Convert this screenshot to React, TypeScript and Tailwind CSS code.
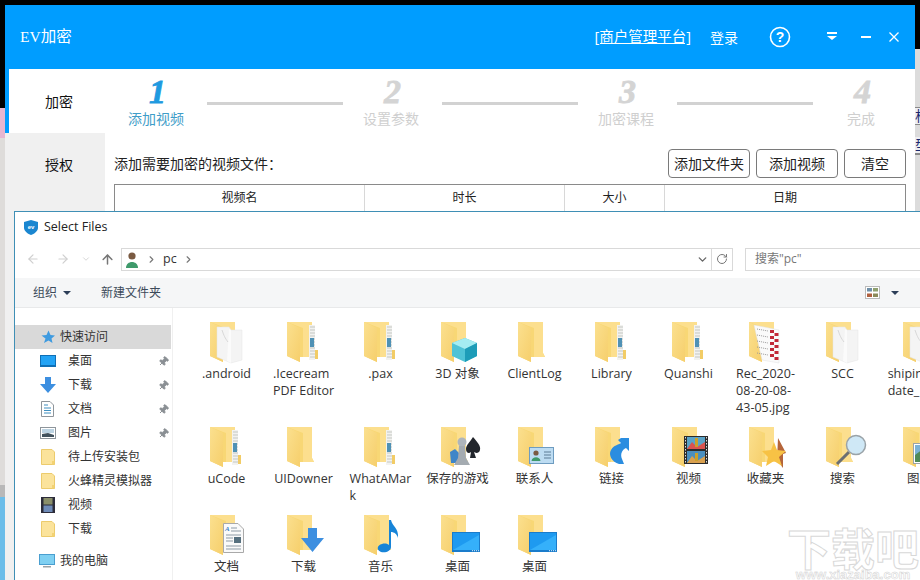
import { ArrowLeft, ArrowRight, ArrowUp, ChevronDown, ChevronRight, Pin, RotateCw } from 'lucide-react';
import type { ReactNode } from 'react';

const Papers = ({ dot }: { dot?: boolean }) => (
  <g>
    <path d="M7 7 L19 7 L21 10 L32 10 L32 40 L21 43 L7 37 Z" fill="#f4f4f4" stroke="#e4e4e4" strokeWidth="0.5" />
    <path d="M19 9 L21 10 L21 43 L17 41 Z" fill="#fbfbfb" />
    <path d="M12 10 C14 16 15 18 18 22" stroke="#d8d8d8" fill="none" />
    {dot && <circle cx="20" cy="22" r="1.6" fill="#222" />}
  </g>
);

const Zipper = () => (
  <g>
    <path d="M22 5 H28 V40 H22 Z" fill="#f2f2f0" />
    {[7, 10, 13, 16, 19, 22, 25, 28, 31, 34, 37].map((y) => (
      <line key={y} x1="23" x2="28" y1={y} y2={y} stroke="#c4c7c2" strokeWidth="1" />
    ))}
    <rect x="23" y="18" width="4" height="9" fill="#4f91b5" />
    <rect x="28" y="30" width="3" height="9" fill="#f2cc66" />
  </g>
);

const Cube = () => (
  <g>
    <path d="M24 18 L36 23 V36 L24 42 L11 36 V23 Z" fill="#4fc3d6" />
    <path d="M24 18 L36 23 L24 29 L11 23 Z" fill="#a5edf2" />
    <path d="M24 29 L36 23 V36 L24 42 Z" fill="#1d9cb8" />
  </g>
);

const Chess = () => (
  <g>
    <path d="M9 27 L14 24 L18 28 V38 H10 Z" fill="#3f86c8" />
    <path d="M32 12 C37 18 40 21 39 25 C38 29 34 28 33 27 L35 33 H29 L30 27 C28 29 25 28 25 24 C25 20 29 17 32 12 Z" fill="#22262c" />
    <circle cx="21" cy="17" r="4.5" fill="#aeb5bb" />
    <path d="M18 21 H24 L25 33 L29 40 H13 L17 33 Z" fill="#a4abb1" />
  </g>
);

const Contact = () => (
  <g>
    <rect x="11.5" y="22.5" width="24" height="16" fill="#bddcf2" stroke="#6e9cc0" />
    <circle cx="18" cy="28" r="2.6" fill="#7a5a42" />
    <path d="M13.5 36 C14 31 22 31 22.5 36 Z" fill="#3f9a6b" />
    <path d="M26 27 H33 M26 30 H33 M26 33 H33" stroke="#5c7d96" />
  </g>
);

const DocSheet = () => (
  <g>
    <path d="M13.5 10.5 H28 L33.5 16 V39.5 H13.5 Z" fill="#fafafa" stroke="#a9a9a9" />
    <text x="15" y="18" fontSize="7" fontStyle="italic" fontWeight="700" fill="#3b82c4" fontFamily="Liberation Serif, serif">A</text>
    <path d="M21 15 H27 M21 18 H31 M16 22 H31 M16 25 H23 M16 28 H23 M16 33 H31 M16 36 H31" stroke="#8d9aa5" />
    <rect x="24" y="24" width="7" height="6" fill="#56707f" />
  </g>
);

const DownArrow = ({ x = 14, y = 15 }: { x?: number; y?: number }) => (
  <path transform={`translate(${x} ${y})`} d="M7 0 H16 V10 H23 L11.5 24 L0 10 H7 Z" fill="#3d8fe0" />
);

const Note = () => (
  <g>
    <path d="M25 7 L27 7 C28 13 35 15 34 25 C33 21 30 19 27 19 V34 C27 38 22 40 17 39 C12 37 13 32 18 31 C21 30 24 31 25 32 Z" fill="#1784d8" />
  </g>
);

const Screen = ({ x = 11, y = 19 }: { x?: number; y?: number }) => (
  <g transform={`translate(${x} ${y})`}>
    <rect width="28" height="20" fill="#1a7ccb" />
    <path d="M1 1 H27 V18 H1 Z" fill="#1e9af0" />
    <path d="M1 18 L27 3 V18 Z" fill="#35b0fa" />
    <path d="M20 18.7 H27" stroke="#d9eefc" strokeDasharray="1 1" />
  </g>
);

const LinkArrow = () => (
  <path d="M26 13 H34 V26 L31 23 C27 25 25 29 27 34 L29 39 H24 C17 37 13 30 16 25 C19 20 23 20 26 18 L23 15 Z" fill="#2a8de0" />
);

const Film = () => (
  <g>
    <rect x="12" y="11" width="24" height="28" fill="#2b2b2b" />
    <rect x="15" y="12" width="18" height="12" fill="#5aa3c8" />
    <rect x="15" y="26" width="18" height="12" fill="#4a8fc0" />
    <path d="M15 24 L20 17 L25 22 L33 17 V24 Z" fill="#d9534f" />
    <path d="M15 38 L20 31 L25 36 L33 31 V38 Z" fill="#d9a04f" />
    <path d="M23 13 H26 V22 H23 Z M23 28 H26 V36 H23 Z" fill="#caa12a" />
    <path d="M13.5 12 V38 M34.5 12 V38" stroke="#ddd" strokeDasharray="1.5 1.5" />
  </g>
);

const Star = () => (
  <g>
    <path d="M29 13 L37 28 L34 29 L34 43 L28 35 Z" fill="#b5653a" />
    <path d="M25 17 L28 25 L37 26 L30 32 L33 41 L25 36 L17 41 L19 32 L13 26 L22 25 Z" fill="#f7c245" />
  </g>
);

const Search = () => (
  <g>
    <path d="M11 39 L23 27" stroke="#6b6f72" strokeWidth="3" />
    <circle cx="30" cy="20" r="9.5" fill="#cfe8f6" stroke="#9aa3a8" strokeWidth="1.5" />
  </g>
);

const Photo = () => (
  <g>
    <rect x="10.5" y="18.5" width="28" height="20" fill="#fff" stroke="#9aa3a8" />
    <rect x="12" y="20" width="25" height="17" fill="#7bb2d6" />
    <path d="M12 37 V30 L20 24 L27 31 L37 28 V37 Z" fill="#4f8a58" />
  </g>
);

const RedList = () => (
  <g>
    <path d="M5 5 L30 10 V43 L13 40 Z" fill="#fafafa" stroke="#e2e2e2" strokeWidth="0.5" />
    {[11, 17, 23, 29, 35].map((y) => (
      <g key={y}>
        <path d={`M8 ${y - 2} L19 ${y}`} stroke="#9a9a9a" strokeDasharray="1 1" />
        <rect x="21" y={y - 1} width="4" height="3" fill="#c22838" />
        <rect x="25.5" y={y + 2} width="4" height="3" fill="#c22838" />
      </g>
    ))}
  </g>
);

const Folder = ({ children }: { children?: ReactNode }) => (
  <svg width="48" height="48" viewBox="0 0 48 48" className="block overflow-visible">
    <defs>
      <linearGradient id="folderFront" x1="0" y1="0" x2="1" y2="1">
        <stop offset="0" stopColor="#fbe08f" />
        <stop offset="1" stopColor="#f6cf6c" />
      </linearGradient>
    </defs>
    <path d="M0 2 H25 V33 L27 37 H13 V42 L0 36 Z" fill="#f8d775" />
    <path d="M25 2 V33 L27 37 H16 V8 L0 2 Z" fill="#fcdf8e" />
    <path d="M0 2 L13 8 V42 L0 36 Z" fill="url(#folderFront)" />
    {children}
  </svg>
);

const items: { lines: string[]; icon?: ReactNode }[] = [
  { lines: ['.android'], icon: <Papers /> },
  { lines: ['.Icecream', 'PDF Editor'], icon: <Zipper /> },
  { lines: ['.pax'], icon: <Zipper /> },
  { lines: ['3D 对象'], icon: <Cube /> },
  { lines: ['ClientLog'] },
  { lines: ['Library'], icon: <Zipper /> },
  { lines: ['Quanshi'], icon: <Zipper /> },
  { lines: ['Rec_2020-', '08-20-08-', '43-05.jpg'], icon: <RedList /> },
  { lines: ['SCC'], icon: <Papers /> },
  { lines: ['shipin_upd', 'date_1'], icon: <Papers dot /> },
  { lines: ['uCode'], icon: <Zipper /> },
  { lines: ['UIDowner'] },
  { lines: ['WhatAMar', 'k'], icon: <Zipper /> },
  { lines: ['保存的游戏'], icon: <Chess /> },
  { lines: ['联系人'], icon: <Contact /> },
  { lines: ['链接'], icon: <LinkArrow /> },
  { lines: ['视频'], icon: <Film /> },
  { lines: ['收藏夹'], icon: <Star /> },
  { lines: ['搜索'], icon: <Search /> },
  { lines: ['图片'], icon: <Photo /> },
  { lines: ['文档'], icon: <DocSheet /> },
  { lines: ['下载'], icon: <DownArrow /> },
  { lines: ['音乐'], icon: <Note /> },
  { lines: ['桌面'], icon: <Screen /> },
  { lines: ['桌面'], icon: <Screen /> },
];

const MiniFolder = () => (
  <svg width="14" height="16" viewBox="0 0 14 16">
    <path d="M0.5 0.5 H11 L13.5 3 V15.5 H0.5 Z" fill="#fbe39b" stroke="#eccb6c" />
    <path d="M11 12 H13.5 V15.5 H11 Z" fill="#f3d273" />
  </svg>
);

const navItems: { label: string; pinned?: boolean; icon: ReactNode }[] = [
  {
    label: '桌面',
    pinned: true,
    icon: (
      <svg width="16" height="12" viewBox="0 0 16 12">
        <rect width="16" height="12" fill="#0f6fb5" />
        <rect x="1" y="1" width="14" height="9" fill="#22a3f5" />
      </svg>
    ),
  },
  {
    label: '下载',
    pinned: true,
    icon: (
      <svg width="16" height="16" viewBox="0 0 16 16">
        <path d="M5 0 H11 V7 H16 L8 16 L0 7 H5 Z" fill="#3d8fe0" />
      </svg>
    ),
  },
  {
    label: '文档',
    pinned: true,
    icon: (
      <svg width="13" height="16" viewBox="0 0 13 16">
        <path d="M0.5 0.5 H9 L12.5 4 V15.5 H0.5 Z" fill="#fff" stroke="#8e959b" />
        <path d="M3 4 H7 M3 7 H10 M3 9.5 H10 M3 12 H10" stroke="#3f8fc0" />
      </svg>
    ),
  },
  {
    label: '图片',
    pinned: true,
    icon: (
      <svg width="16" height="12" viewBox="0 0 16 12">
        <rect x="0.5" y="0.5" width="15" height="11" fill="#fff" stroke="#8e959b" />
        <rect x="2" y="2" width="12" height="4" fill="#bcd3e2" />
        <path d="M2 10 V7 L8 6 L14 8 V10 Z" fill="#41515c" />
      </svg>
    ),
  },
  { label: '待上传安装包', icon: <MiniFolder /> },
  { label: '火蜂精灵模拟器', icon: <MiniFolder /> },
  {
    label: '视频',
    icon: (
      <svg width="14" height="16" viewBox="0 0 14 16">
        <rect width="14" height="16" fill="#2c2c3a" />
        <rect x="2.5" y="1" width="9" height="6.5" fill="#8a8f6a" />
        <rect x="2.5" y="8.5" width="9" height="6.5" fill="#6f8bb8" />
      </svg>
    ),
  },
  { label: '下载', icon: <MiniFolder /> },
];

const Step = ({ num, label, active }: { num: string; label: string; active?: boolean }) => (
  <div className="flex w-[99px] shrink-0 flex-col items-center">
    <span className={`font-['Liberation_Serif',serif] text-[34px] leading-[36px] font-bold italic [-webkit-text-stroke:0.8px_currentColor] ${active ? 'text-[#1f9ae0]' : 'text-[#d4d4d4]'}`}>
      {num}
    </span>
    <span className={`-ml-[3px] text-[14px] leading-[18px] ${active ? 'text-[#3f9dc8]' : 'text-[#cfcfcf]'}`}>{label}</span>
  </div>
);

const StepLine = () => <div className="mt-[28px] h-[3px] w-[136px] shrink-0 bg-[#d2d2d2]" />;

const ToolButton = ({ label, width }: { label: string; width: string }) => (
  <button className={`h-[29px] rounded-[4px] border border-[#7a7a7a] bg-white text-[14px] text-[#222] ${width}`}>{label}</button>
);

export default function App() {
  return (
    <div className="relative flex h-[580px] w-[920px] overflow-hidden bg-black font-['Open_Sans','Noto_Sans_CJK_SC',sans-serif]">
      {/* desktop behind the windows */}
      <div className="flex h-full w-[5px] shrink-0 flex-col">
        <div className="h-[108px] bg-black" />
        <div className="h-[30px] bg-[#e6b6d0]" />
        <div className="h-[347px] bg-[#dedcda]" />
        <div className="h-[12px] bg-[#b8b8b8]" />
        <div className="flex-1 bg-[#6bbde9]" />
      </div>

      {/* EV window */}
      <div className="mt-[5px] flex w-[910px] shrink-0 flex-col">
        <div className="flex h-[64px] shrink-0 items-center bg-[#009dff] pr-[16px] pl-[15px] text-white">
          <span className="font-['Liberation_Serif','Noto_Sans_CJK_SC',serif] text-[15.5px]">EV加密</span>
          <div className="ml-auto flex items-center">
            <a className="text-[14.5px] underline">[商户管理平台]</a>
            <span className="ml-[19px] text-[14px]">登录</span>
            <svg width="22" height="22" viewBox="0 0 22 22" className="ml-[31px]">
              <circle cx="11" cy="11" r="9.5" fill="none" stroke="#fff" strokeWidth="1.6" />
              <text x="11" y="16" textAnchor="middle" fontSize="14" fontWeight="700" fill="#fff" fontFamily="Liberation Sans, sans-serif">?</text>
            </svg>
            <svg width="12" height="8" viewBox="0 0 12 8" className="mb-[2px] ml-[35px]">
              <rect x="1" y="0" width="10" height="2" fill="#fff" />
              <path d="M1 4 H11 L6 8 Z" fill="#fff" />
            </svg>
            <div className="ml-[23px] h-[2px] w-[10px] bg-white" />
            <svg width="10" height="10" viewBox="0 0 10 10" className="ml-[18px]">
              <path d="M0.5 0.5 L9.5 9.5 M9.5 0.5 L0.5 9.5" stroke="#fff" strokeWidth="1.3" />
            </svg>
          </div>
        </div>

        <div className="flex min-h-0 flex-1 bg-white">
          <div className="flex w-[100px] shrink-0 flex-col text-center text-[14px] text-[#111]">
            <div className="flex h-[64px] border-l-[4px] border-[#009dff] bg-white pl-[4px]">
              <span className="m-auto">加密</span>
            </div>
            <div className="h-[63px] bg-[#f0f0f0] pt-[21px] pl-[8px]">授权</div>
            <div className="flex-1 bg-[#f0f0f0]" />
          </div>

          <div className="flex min-w-0 flex-1 flex-col">
            <div className="flex h-[64px] pt-[5px] pl-[3px]">
              <Step num="1" label="添加视频" active />
              <StepLine />
              <Step num="2" label="设置参数" />
              <StepLine />
              <Step num="3" label="加密课程" />
              <StepLine />
              <Step num="4" label="完成" />
            </div>
            <div className="flex items-center pt-[16px] pr-[9px] pl-[9px]">
              <span className="text-[14px] text-[#222]">添加需要加密的视频文件：</span>
              <div className="ml-auto flex gap-[6px]">
                <ToolButton label="添加文件夹" width="w-[82px]" />
                <ToolButton label="添加视频" width="w-[82px]" />
                <ToolButton label="清空" width="w-[62px]" />
              </div>
            </div>
            <div className="mt-[6px] mr-[9px] ml-[9px] flex h-[28px] border-x border-t border-[#8a8a8a] text-center text-[12px] leading-[25px] text-[#222]">
              <div className="w-[250px] border-r border-[#d8d8d8]">视频名</div>
              <div className="w-[200px] border-r border-[#d8d8d8]">时长</div>
              <div className="w-[100px] border-r border-[#d8d8d8]">大小</div>
              <div className="flex-1">日期</div>
            </div>
          </div>
        </div>
      </div>

      <div className="relative h-full flex-1 bg-[#dcdcdc]">
        <div className="h-[49px] bg-black" />
        <div className="mt-[58px] h-[18px] overflow-hidden border-y border-[#8a8a8a] bg-[#eeeef2] text-[14px] leading-[16px] text-[#1a2a70]">析</div>
        <div className="mt-[12px] h-[18px] overflow-hidden border-b-2 border-[#8a8a8a] bg-[#eeeef2] text-[14px] leading-[16px] text-[#1a2a70]">型</div>
      </div>

      {/* Select Files dialog */}
      <div className="absolute top-[211px] left-[14px] flex h-[369px] w-[910px] flex-col border-t border-l border-[#3f8fb5] bg-white text-[#333]">
        <div className="flex h-[28px] shrink-0 items-center pt-[2px] pl-[9px]">
          <svg width="14" height="15" viewBox="0 0 14 15">
            <path d="M7 0 L14 2 V8 C14 11 10 14 7 15 C4 14 0 11 0 8 V2 Z" fill="#1a86d0" />
            <text x="7" y="9" textAnchor="middle" fontSize="6" fontWeight="700" fill="#fff" fontFamily="Liberation Sans, sans-serif">ev</text>
          </svg>
          <span className="ml-[6px] text-[12.5px] text-[#222]">Select Files</span>
        </div>

        <div className="flex h-[38px] shrink-0 items-center">
          <ArrowLeft size={14} className="ml-[11px] text-[#cfcfcf]" />
          <ArrowRight size={14} className="ml-[16px] text-[#cfcfcf]" />
          <ChevronDown size={10} className="ml-[11px] text-[#cfcfcf]" />
          <ArrowUp size={15} className="ml-[9px] text-[#777]" strokeWidth={2.4} />
          <div className="ml-[6px] flex h-[23px] w-[612px] items-center border border-[#d9d9d9]">
            <svg width="14" height="17" viewBox="0 0 14 17" className="ml-[3px]">
              <circle cx="7" cy="5" r="3.6" fill="#7a5a42" />
              <path d="M1 17 C1 9 13 9 13 17 Z" fill="#3f9a6b" />
            </svg>
            <ChevronRight size={11} className="ml-[7px] text-[#777]" strokeWidth={2.5} />
            <span className="ml-[6px] text-[12.5px]">pc</span>
            <ChevronRight size={11} className="ml-[6px] text-[#777]" strokeWidth={2.5} />
            <ChevronDown size={13} className="ml-auto text-[#666]" strokeWidth={2.5} />
            <div className="ml-[2px] flex h-full w-[21px] items-center justify-center border-l border-[#d9d9d9]">
              <RotateCw size={12} className="text-[#777]" />
            </div>
          </div>
          <div className="ml-[12px] flex h-[23px] flex-1 items-center border border-[#d9d9d9] pl-[9px] text-[12px] text-[#777]">搜索"pc"</div>
        </div>

        <div className="flex h-[30px] shrink-0 items-center border-b border-[#e8e9ea] bg-[#f5f6f7] pl-[18px] text-[12px] text-[#3c4a5a]">
          <span>组织</span>
          <div className="ml-[6px] h-0 w-0 border-x-[4px] border-t-[4px] border-x-transparent border-t-[#2c3e58]" />
          <span className="ml-[30px]">新建文件夹</span>
          <svg width="15" height="13" viewBox="0 0 15 13" className="ml-[704px]">
            <rect x="0.5" y="0.5" width="14" height="12" fill="#fff" stroke="#bbb" />
            <rect x="2" y="2" width="5" height="3.5" fill="#6f8fa8" />
            <rect x="8" y="2" width="5" height="3.5" fill="#8fa06f" />
            <rect x="2" y="7.5" width="5" height="3.5" fill="#b0603f" />
            <rect x="8" y="7.5" width="5" height="3.5" fill="#8a8a5a" />
          </svg>
          <div className="ml-[11px] h-0 w-0 border-x-[4px] border-t-[4px] border-x-transparent border-t-[#2c3e58]" />
        </div>

        <div className="flex min-h-0 flex-1">
          <div className="w-[158px] shrink-0 border-r border-[#f0f0f0] pt-[17px] text-[12px]">
            <div className="flex h-[24px] w-[156px] items-center bg-[#d9d9d9] pl-[26px]">
              <svg width="14" height="14" viewBox="0 0 14 14">
                <path d="M7.5 0.5 L9.5 5 L14 5.5 L10.5 8.5 L11.5 13 L7.5 10.5 L3 13 L4.5 8.5 L0.5 5.5 L5.5 5 Z" fill="#3f9be0" />
              </svg>
              <span className="ml-[5px]">快速访问</span>
            </div>
            {navItems.map((item, index) => (
              <div key={index} className="flex h-[24px] w-[156px] items-center">
                <div className="flex w-[49px] shrink-0 justify-center pl-[16px]">{item.icon}</div>
                <span className="ml-[4px]">{item.label}</span>
                {item.pinned && <Pin size={11} className="mr-[2px] ml-auto rotate-45 fill-[#8a8f94] text-[#8a8f94]" />}
              </div>
            ))}
            <div className="mt-[8px] flex h-[24px] items-center pl-[24px]">
              <svg width="16" height="14" viewBox="0 0 16 14">
                <rect x="0.5" y="0.5" width="15" height="10" fill="#7fd0f2" stroke="#4a9fd0" />
                <rect x="4" y="12" width="8" height="1.5" fill="#9aa3a8" />
              </svg>
              <span className="ml-[5px]">我的电脑</span>
            </div>
          </div>

          <div className="grid flex-1 auto-rows-min grid-cols-[repeat(10,77px)] pt-[7px] pl-[15px] text-center text-[12.5px] leading-[17px] text-[#333]">
            {items.map((item, index) => (
              <div key={index} className={`${index < 10 ? 'h-[105px]' : index < 20 ? 'h-[88px]' : 'h-[60px]'}`}>
                <div className="h-[50px] pt-[5px] pl-[22px]">
                  <Folder>{item.icon}</Folder>
                </div>
                <div className={`mx-auto ${item.lines.length > 1 ? 'w-fit text-left' : ''}`}>
                  {item.lines.map((line) => (
                    <div key={line} className="whitespace-nowrap">{line}</div>
                  ))}
                </div>
              </div>
            ))}
          </div>
        </div>
      </div>

      {/* site watermark */}
      <div className="absolute top-[525px] left-[786px] flex w-[134px] flex-col items-center">
        <span className="font-['Noto_Sans_CJK_SC',sans-serif] text-[44px] leading-[44px] font-bold text-white [-webkit-text-stroke:1px_#d8d8d8]">下载吧</span>
        <span className="mt-[1px] font-['Liberation_Sans',sans-serif] text-[13px] leading-[10px] font-bold text-white [-webkit-text-stroke:0.5px_#d0d0d0]">www.xiazaiba.com</span>
      </div>
    </div>
  );
}
